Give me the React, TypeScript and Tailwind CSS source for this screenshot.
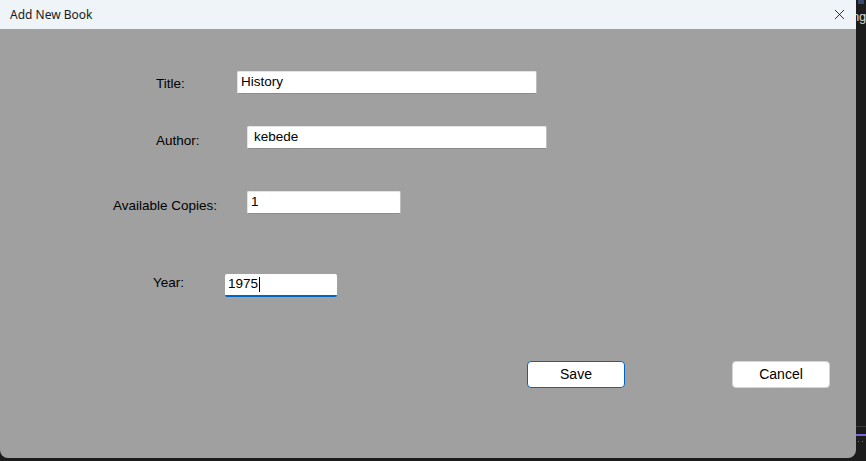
import { X } from "lucide-react";

const labelFont = { fontFamily: '"Liberation Sans", Arial, sans-serif' };

function Field({ label, value, labelLeft, labelWidth, inputWidth, padLeft, focused, labelShift }: any) {
  return (
    <div className="flex items-center">
      <div className={`${labelLeft} ${labelWidth} ${labelShift} text-[13.5px] text-black`}>{label}</div>
      <div
        className={`${inputWidth} h-[23px] bg-white rounded-[2px] flex items-center ${padLeft} text-[13.5px] text-black ${
          focused ? "border-b-2 border-b-[#0067c0]" : "border border-[#e3e3e3] border-b-[#8c8c8c] border-r-[#bdbdbd]"
        }`}
      >
        <span>{value}</span>
        {focused && <span className="w-px h-[15px] bg-black ml-[1px]"></span>}
      </div>
    </div>
  );
}

export default function App() {
  return (
    <div className="w-[866px] h-[461px] bg-[#1c1c1c] flex overflow-hidden" style={labelFont}>
      {/* dialog window */}
      <div className="w-[856px] h-[458px] bg-[#a0a0a0] rounded-b-[8px] flex flex-col shrink-0 overflow-hidden">
        <div className="h-[29px] bg-[#eef4f7] flex items-center justify-between pl-[10px] pr-[8px] shrink-0">
          <span className="text-[12px] text-[#1a1a1a]" style={{ fontFamily: '"Noto Sans", "Open Sans", sans-serif' }}>
            Add New Book
          </span>
          <X size={17} strokeWidth={1.1} className="text-black" />
        </div>

        <div className="flex flex-col">
          <div className="mt-[42px]">
            <Field label="Title:" value="History" labelLeft="ml-[156px]" labelWidth="w-[81px]" inputWidth="w-[300px]" padLeft="pl-[3px]" labelShift="translate-y-[2px]" />
          </div>
          <div className="mt-[32px]">
            <Field label="Author:" value="kebede" labelLeft="ml-[156px]" labelWidth="w-[91px]" inputWidth="w-[300px]" padLeft="pl-[6px]" labelShift="translate-y-[4px]" />
          </div>
          <div className="mt-[42px]">
            <Field label="Available Copies:" value="1" labelLeft="ml-[113px]" labelWidth="w-[134px]" inputWidth="w-[154px]" padLeft="pl-[3px]" labelShift="translate-y-[4px]" />
          </div>
          <div className="mt-[60px]">
            <Field label="Year:" value="1975" labelLeft="ml-[153px]" labelWidth="w-[72px]" inputWidth="w-[112px]" padLeft="pl-[3px]" labelShift="-translate-y-[2px]" focused />
          </div>

          <div className="mt-[64px] flex ml-[527px] gap-[107px]">
            <button className="w-[98px] h-[27px] bg-white border border-[#0067c0] rounded-[4px] text-[14px] text-black">Save</button>
            <button className="w-[98px] h-[27px] bg-white border border-[#d4d4d4] rounded-[4px] text-[14px] text-black">Cancel</button>
          </div>
        </div>
      </div>

      {/* app behind the dialog */}
      <div className="flex-1 flex flex-col overflow-hidden">
        <div className="h-[4px] mx-[2px] bg-[#3a4a6a]"></div>
        <span className="text-[13px] text-[#d8d8d8] leading-none mt-[6px] -ml-[7px] whitespace-nowrap">ing</span>
        <div className="mt-[403px] h-px bg-[#3c3c3c]"></div>
        <div className="mt-[7px] h-[2px] bg-[#7866d8]"></div>
        <div className="mt-[5px] flex gap-[3px] pl-[2px]">
          <span className="w-px h-px bg-[#777]"></span>
          <span className="w-px h-px bg-[#777]"></span>
        </div>
      </div>
    </div>
  );
}
